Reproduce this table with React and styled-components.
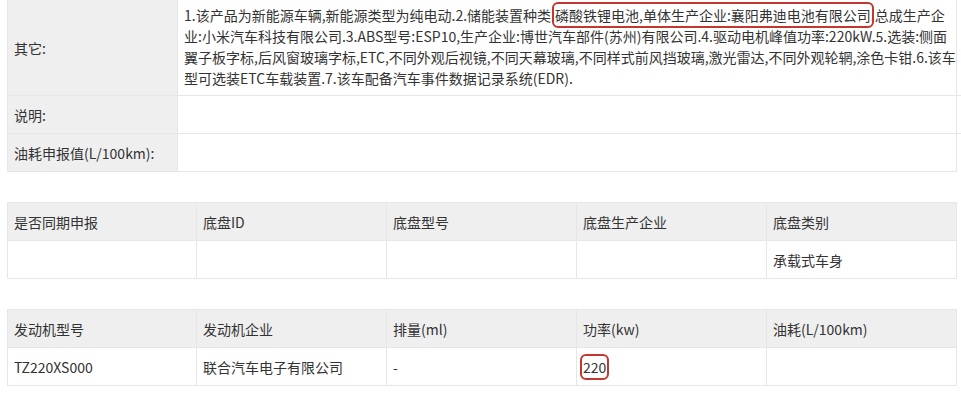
import React from "react";
import styled, { createGlobalStyle } from "styled-components";

const GlobalStyle = createGlobalStyle`
  body {
    margin: 0;
    background: #fff;
    font-family: "Noto Sans CJK SC", "Liberation Sans", sans-serif;
    color: #333;
    font-size: 14px;
    overflow: hidden;
  }
`;

const Page = styled.div`
  width: 950px;
  padding: 0 0 0 7px;
  display: flex;
  flex-direction: column;
  gap: 30px;
`;

const InfoTable = styled.div`
  display: grid;
  grid-template-columns: 170px 1fr;
  border: 1px solid #e6e6e6;
  border-top: none;
`;

const Label = styled.div`
  display: flex;
  align-items: center;
  background: #efefef;
  padding: 0 6px;
  min-height: ${(p) => p.$h || 37}px;
  border-right: 1px solid #e6e6e6;
  border-bottom: ${(p) => (p.$last ? "none" : "1px solid #e6e6e6")};
  box-sizing: border-box;
`;

const Value = styled.div`
  padding: 5px 6px 6px 6px;
  line-height: 21px;
  border-bottom: ${(p) => (p.$last ? "none" : "1px solid #e6e6e6")};
  box-sizing: border-box;
  min-height: ${(p) => p.$h || 37}px;
`;

const Line = styled.div`
  white-space: nowrap;
`;

const Mark = styled.span`
  outline: 2px solid #c43630;
  outline-offset: 1px;
  border-radius: 3px;
`;

const GridTable = styled.div`
  display: grid;
  grid-template-columns: 189px 190px 190px 190px 1fr;
  border: 1px solid #e6e6e6;
`;

const Cell = styled.div`
  display: flex;
  align-items: center;
  height: ${(p) => (p.$head ? 38 : 37)}px;
  padding: 0 6px;
  box-sizing: border-box;
  background: ${(p) => (p.$head ? "#efefef" : "#fff")};
  border-right: ${(p) => (p.$end ? "none" : "1px solid #e6e6e6")};
  border-bottom: ${(p) => (p.$head ? "1px solid #e6e6e6" : "none")};
  white-space: nowrap;
`;

const DataTable = ({ head, row }) => (
  <GridTable>
    {head.map((h, i) => (
      <Cell key={"h" + i} $head $end={i === head.length - 1}>
        {h}
      </Cell>
    ))}
    {row.map((v, i) => (
      <Cell key={"r" + i} $end={i === row.length - 1}>
        {v}
      </Cell>
    ))}
  </GridTable>
);

export default function App() {
  return (
    <Page>
      <GlobalStyle />
      <InfoTable>
        <Label $h={95}>其它:</Label>
        <Value $h={95}>
          <Line>
            1.该产品为新能源车辆,新能源类型为纯电动.2.储能装置种类:
            <Mark>磷酸铁锂电池,单体生产企业:襄阳弗迪电池有限公司</Mark>.总成生产企
          </Line>
          <Line>
            业:小米汽车科技有限公司.3.ABS型号:ESP10,生产企业:博世汽车部件(苏州)有限公司.4.驱动电机峰值功率:220kW.5.选装:侧面
          </Line>
          <Line>
            翼子板字标,后风窗玻璃字标,ETC,不同外观后视镜,不同天幕玻璃,不同样式前风挡玻璃,激光雷达,不同外观轮辋,涂色卡钳.6.该车
          </Line>
          <Line>型可选装ETC车载装置.7.该车配备汽车事件数据记录系统(EDR).</Line>
        </Value>
        <Label $h={38}>说明:</Label>
        <Value $h={38} />
        <Label $last>油耗申报值(L/100km):</Label>
        <Value $last />
      </InfoTable>

      <DataTable
        head={["是否同期申报", "底盘ID", "底盘型号", "底盘生产企业", "底盘类别"]}
        row={["", "", "", "", "承载式车身"]}
      />

      <DataTable
        head={["发动机型号", "发动机企业", "排量(ml)", "功率(kw)", "油耗(L/100km)"]}
        row={["TZ220XS000", "联合汽车电子有限公司", "-", <Mark>220</Mark>, ""]}
      />
    </Page>
  );
}
